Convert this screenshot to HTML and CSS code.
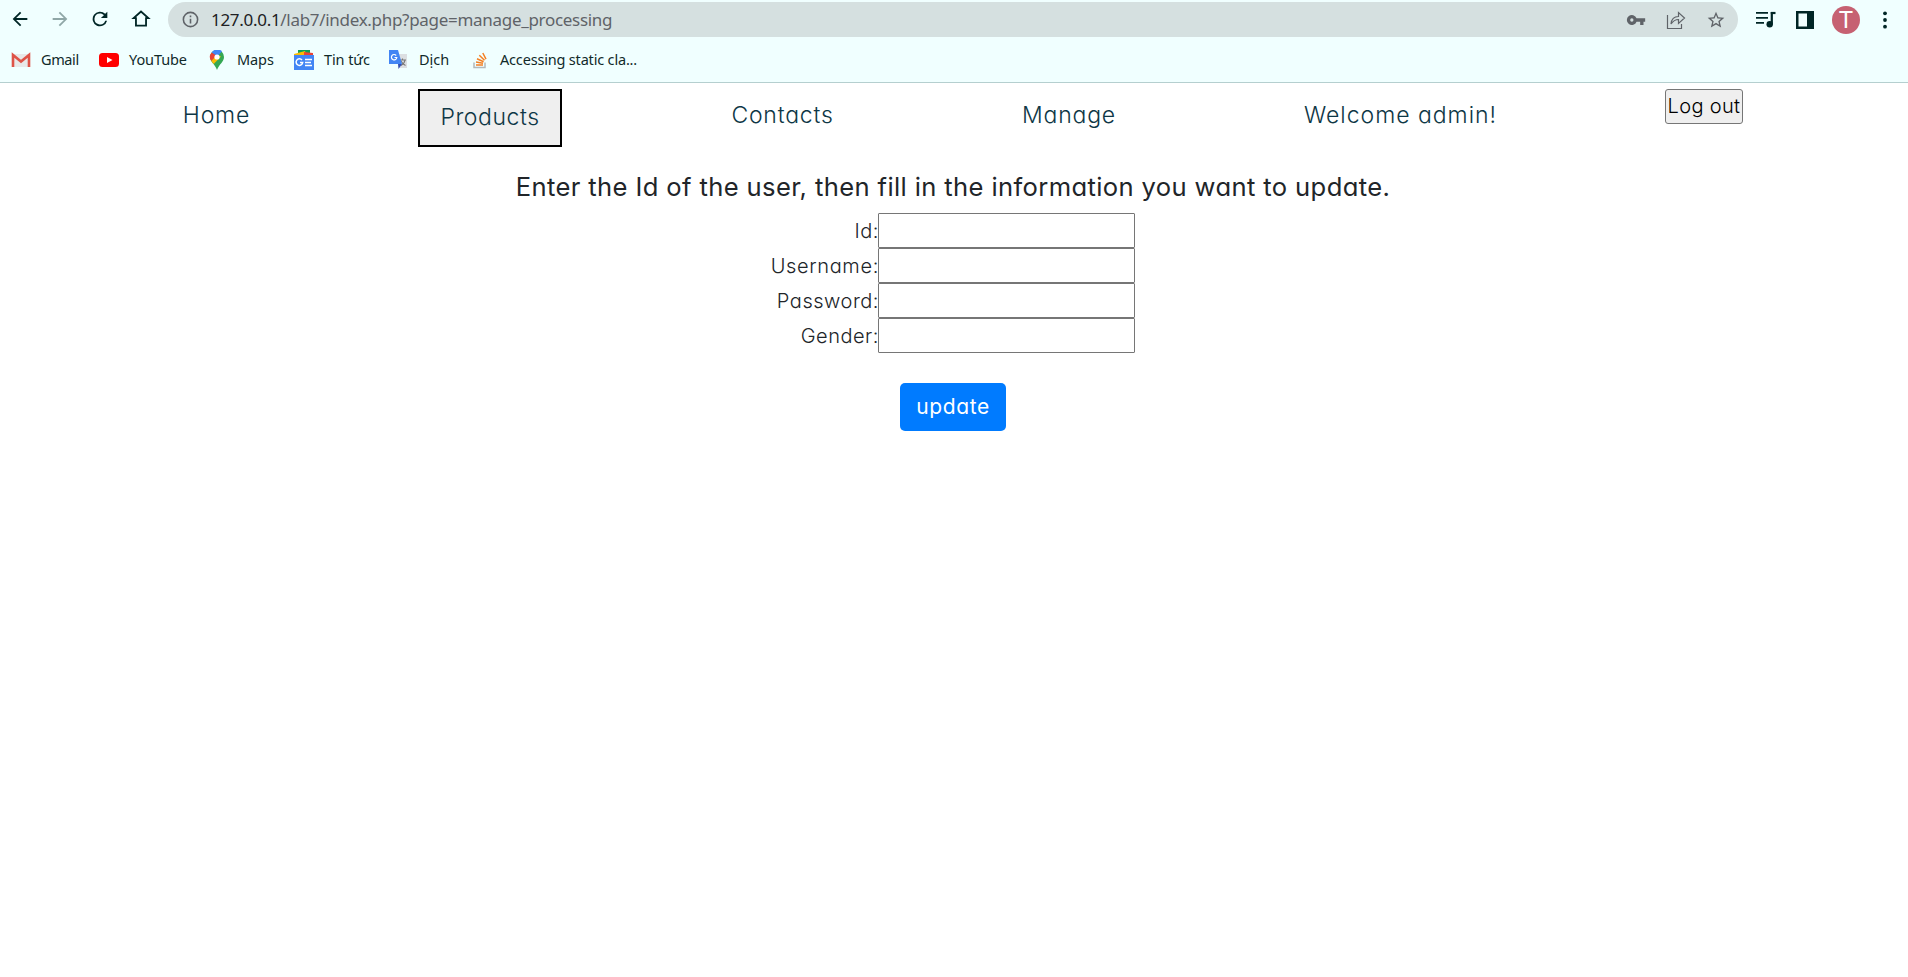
FILE: index.html
```html
<!DOCTYPE html>
<html lang="en">
<head>
<meta charset="utf-8">
<title>Manage processing</title>
<link rel="stylesheet" href="styles.css">
</head>
<body>
<header class="browser">
  <div class="toolbar">
    <div class="nav-icons">
      <svg class="icon" viewBox="0 0 24 24"><path d="M20 11H7.8l5.6-5.6L12 4l-8 8 8 8 1.4-1.4L7.8 13H20z"/></svg>
      <svg class="icon faded" viewBox="0 0 24 24"><path d="M12 4l-1.4 1.4 5.6 5.6H4v2h12.200l-5.600 5.600L12 20l8-8z"/></svg>
      <svg class="icon" viewBox="0 0 24 24"><path d="M17.650 6.350A8 8 0 1 0 19.730 14h-2.080A6 6 0 1 1 12 6c1.660 0 3.140.69 4.220 1.780L13 11h7V4z"/></svg>
      <svg class="icon" viewBox="0 0 24 24"><path d="M6.500 19.300V11H4l8-7.200 8 7.200h-2.500v8.300z" fill="none" stroke="currentColor" stroke-width="2"/></svg>
    </div>
    <div class="address">
      <svg class="info" viewBox="0 0 24 24"><path d="M11 7h2v2h-2zm0 4h2v6h-2zm1-9a10 10 0 1 0 0 20 10 10 0 0 0 0-20zm0 18a8 8 0 1 1 0-16 8 8 0 0 1 0 16z"/></svg>
      <span class="url"><span class="host">127.0.0.1</span>/lab7/index.php?page=manage_processing</span>
      <div class="address-icons">
        <svg class="key" viewBox="0 0 24 24"><path fill-rule="evenodd" d="M12.650 10a6 6 0 1 0 0 4H17v4h4v-4h2v-4zM7 14a2 2 0 1 1 0-4 2 2 0 0 1 0 4z"/></svg>
        <svg class="share" viewBox="0 0 20 20"><path d="M1.500 5v13.500h14V14M5 14c.5-5 3-7.500 7.500-7.500V2.500l6 5.500-6 5.500v-4C9 9.500 7 11 5 14z" fill="none" stroke="currentColor" stroke-width="1.200"/></svg>
        <svg class="star" viewBox="0 0 24 24"><path d="M22 9.240l-7.190-.62L12 2 9.190 8.630 2 9.240l5.460 4.730L5.820 21 12 17.270 18.180 21l-1.630-7.030zM12 15.400l-3.760 2.270 1-4.280-3.320-2.880 4.380-.38L12 6.100l1.710 4.040 4.380.38-3.320 2.880 1 4.280z"/></svg>
      </div>
    </div>
    <div class="right-icons">
      <svg class="music" viewBox="0 0 20 18"><path d="M0 1.900h12M0 6.900h12M0 11.900h8" stroke="currentColor" stroke-width="1.800" fill="none"/><path d="M14.800 2h4.700" stroke="currentColor" stroke-width="2.200"/><path d="M15.800 1v12" stroke="currentColor" stroke-width="2.200"/><circle cx="13.700" cy="13.200" r="3.200"/></svg>
      <svg class="panel" viewBox="0 0 18 18"><path fill-rule="evenodd" d="M0 0h18v18H0zM2.500 2.500v13H11v-13z"/></svg>
      <span class="avatar">T</span>
      <svg class="dots" viewBox="0 0 4 18"><circle cx="2" cy="2.300" r="1.900"/><circle cx="2" cy="9" r="1.900"/><circle cx="2" cy="15.700" r="1.900"/></svg>
    </div>
  </div>
  <div class="bookmarks">
    <a class="bookmark b1"><svg viewBox="0 0 20 20"><path d="M2 4h16v13H2z" fill="#e8e8e8"/><path d="M2 17V5l8 6.500L18 5v12" fill="none" stroke="#de5347" stroke-width="2.600"/></svg><span>Gmail</span></a>
    <a class="bookmark b2"><svg viewBox="0 0 20 20"><rect y="3" width="20" height="14" rx="3.500" fill="#f00"/><path d="M8 7l5.500 3L8 13z" fill="#fff"/></svg><span>YouTube</span></a>
    <a class="bookmark b3"><svg viewBox="0 0 20 20"><path d="M10 0a7 7 0 0 0-7 7c0 5 5 7 7 13 2-6 7-8 7-13a7 7 0 0 0-7-7z" fill="#34a853"/><path d="M4.600 2.500L10 7l5-5.800A7 7 0 0 0 4.600 2.500z" fill="#4285f4"/><path d="M4.600 2.500A7 7 0 0 0 4.300 11L10 6z" fill="#ea4335"/><path d="M4.300 11l2.400 3L14 6.500 10 5z" fill="#fbbc04"/><circle cx="10" cy="7" r="2.600" fill="#fff"/></svg><span>Maps</span></a>
    <a class="bookmark b4"><svg viewBox="0 0 20 20"><path d="M4 0h12v6H4z" fill="#0f9d58"/><path d="M0 4l11-3 2 5H0z" fill="#fbbc04"/><path d="M10 2l9 1v4h-9z" fill="#ea4335"/><path d="M0 5h20v15H0z" fill="#4285f4"/><path d="M8 10a3.300 3.300 0 1 0 .7 2.500H6M11 9.500h7M11 12.500h6M11 15.500h7" fill="none" stroke="#fff" stroke-width="1.500"/></svg><span>Tin tức</span></a>
    <a class="bookmark b5"><svg viewBox="0 0 20 20"><path d="M8 4h11v14H11z" fill="#dcdfe2"/><path d="M11 10h7M14.500 8.500V10M17 10c-.5 3-2 4.500-4 5.500M13 11c1 2 2.500 3.500 4.500 4.500" fill="none" stroke="#777" stroke-width="1.100"/><path d="M1 0h9l4 14H1z" fill="#4285f4"/><path d="M10 14h4l-3.500 5z" fill="#3450b5"/><path d="M8.200 5.500a2.700 2.700 0 1 0 .6 2H6.500" fill="none" stroke="#fff" stroke-width="1.200"/></svg><span>Dịch</span></a>
    <a class="bookmark b6"><svg viewBox="0 0 20 20"><path d="M4 12.500v5h11v-5" fill="none" stroke="#b3b9bb" stroke-width="1.500"/><path d="M6 15h7M6 12l7 1.300M7 8.700l6.600 3M9.300 5.300l5.200 5M12.800 3l3.200 6.200" stroke="#f48024" stroke-width="1.500"/></svg><span>Accessing static cla...</span></a>
  </div>
</header>
<nav class="menu">
  <a class="link home">Home</a>
  <a class="link products">Products</a>
  <a class="link contacts">Contacts</a>
  <a class="link manage">Manage</a>
  <a class="link welcome">Welcome admin!</a>
  <button class="logout">Log out</button>
</nav>
<main class="content">
  <h1 class="title">Enter the Id of the user, then fill in the information you want to update.</h1>
  <form class="form">
    <label for="id">Id:</label><input id="id">
    <label for="user" class="wide">Username:</label><input id="user">
    <label for="pass">Password:</label><input id="pass">
    <label for="gender">Gender:</label><input id="gender">
  </form>
  <button class="update">update</button>
</main>
</body>
</html>
```
FILE: styles.css
```css
* { box-sizing: border-box; }
body {
  margin: 0;
  background: #fff;
  color: #212529;
  font: 340 20px/35px Inter, "Open Sans", sans-serif;
  font-feature-settings: "cv11" 1;
}
.browser {
  height: 83px;
  background: #f0ffff;
  border-bottom: 1px solid #b5cfcf;
  font-family: "Noto Sans", "Open Sans", sans-serif;
  font-weight: 400;
  font-feature-settings: normal;
}
.toolbar { display: flex; height: 38px; padding-top: 2px; color: #002626; }
.toolbar svg, .bookmark svg { fill: currentColor; flex: none; }
.nav-icons { display: flex; width: 168px; padding: 6px 0 0 9px; gap: 18.2px; }
.icon { width: 22px; height: 22px; }
.faded { opacity: .4; }
.address {
  display: flex;
  align-items: center;
  width: 1570px;
  height: 35px;
  padding: 0 12px 0 13px;
  border-radius: 18px;
  background: #d5e0e0;
  color: #5f6368;
}
.info { width: 19px; height: 19px; }
.url { margin-left: 11px; font-size: 17px; letter-spacing: -.3px; white-space: nowrap; }
.host { color: #202124; }
.address-icons { display: flex; align-items: center; gap: 20px; margin-left: auto; }
.key, .share, .star { width: 20px; height: 20px; }
.right-icons { display: flex; align-items: center; height: 35px; padding-left: 18px; }
.music { width: 20px; height: 18px; }
.panel { width: 18px; height: 18px; margin-left: 20px; }
.avatar {
  width: 28px;
  height: 28px;
  margin-left: 18px;
  border-radius: 50%;
  background: #c66172;
  color: #fff;
  font: 400 24px/28px Roboto, sans-serif;
  text-align: center;
}
.dots { width: 4px; height: 18px; margin-left: 23px; }
.bookmarks { display: flex; height: 44px; padding-left: 11px; color: #102a2a; font-size: 14.5px; }
.bookmark { display: flex; align-items: center; white-space: nowrap; }
.bookmark svg { width: 20px; height: 20px; }
.bookmark span { margin-left: 10px; padding-bottom: 1px; line-height: 19px; }
.b1 { width: 88px; letter-spacing: -.4px; }
.b2 { width: 108px; letter-spacing: -.1px; }
.b3 { width: 87px; letter-spacing: -.1px; }
.b4 { width: 94px; letter-spacing: -.1px; }
.b5 { width: 82px; }
.b5 span { margin-left: 11px; }
.b6 { letter-spacing: -.18px; }
.menu { display: flex; align-items: flex-start; gap: 147px; padding: 6px 0 0 161px; color: #0e3746; }
.link {
  display: flex;
  justify-content: center;
  height: 58px;
  padding-top: 9px;
  font-size: 23px;
  letter-spacing: .8px;
  white-space: nowrap;
}
.home { width: 111px; margin-right: -1px; }
.products { width: 144px; border: 2px solid #000; background: #efefef; letter-spacing: .55px; }
.contacts { width: 147px; }
.manage { width: 132px; }
.welcome { width: 237px; margin-right: -1px; letter-spacing: .98px; }
.logout {
  width: 78px;
  height: 35px;
  padding: 0 0 1px;
  border: 1px solid #767676;
  border-radius: 3px;
  background: #efefef;
  color: #000;
  font: inherit;
  line-height: 30px;
  letter-spacing: .35px;
  white-space: nowrap;
}
.content { display: flex; flex-direction: column; align-items: center; padding-right: 2px; }
.title {
  height: 35px;
  margin: 22px 0 9px;
  font-size: 25.600px;
  font-weight: 400;
  line-height: 35px;
  letter-spacing: .37px;
  white-space: nowrap;
}
.form { display: grid; grid-template-columns: 107px 257px; width: 364px; }
.form label {
  display: flex;
  justify-content: flex-end;
  margin-right: -1px;
  padding-top: 1px;
  line-height: 34px;
  letter-spacing: .52px;
  white-space: nowrap;
}
.form .wide { letter-spacing: .65px; }
.form input { height: 35px; border: 1px solid #767676; border-radius: 1px; background: #fff; }
.update {
  width: 106px;
  height: 48px;
  margin-top: 30px;
  padding: 0 0 2px;
  border: 0;
  border-radius: 5px;
  background: #007bff;
  color: #fff;
  font: inherit;
  font-size: 21px;
  font-weight: 400;
  letter-spacing: .6px;
}
```
